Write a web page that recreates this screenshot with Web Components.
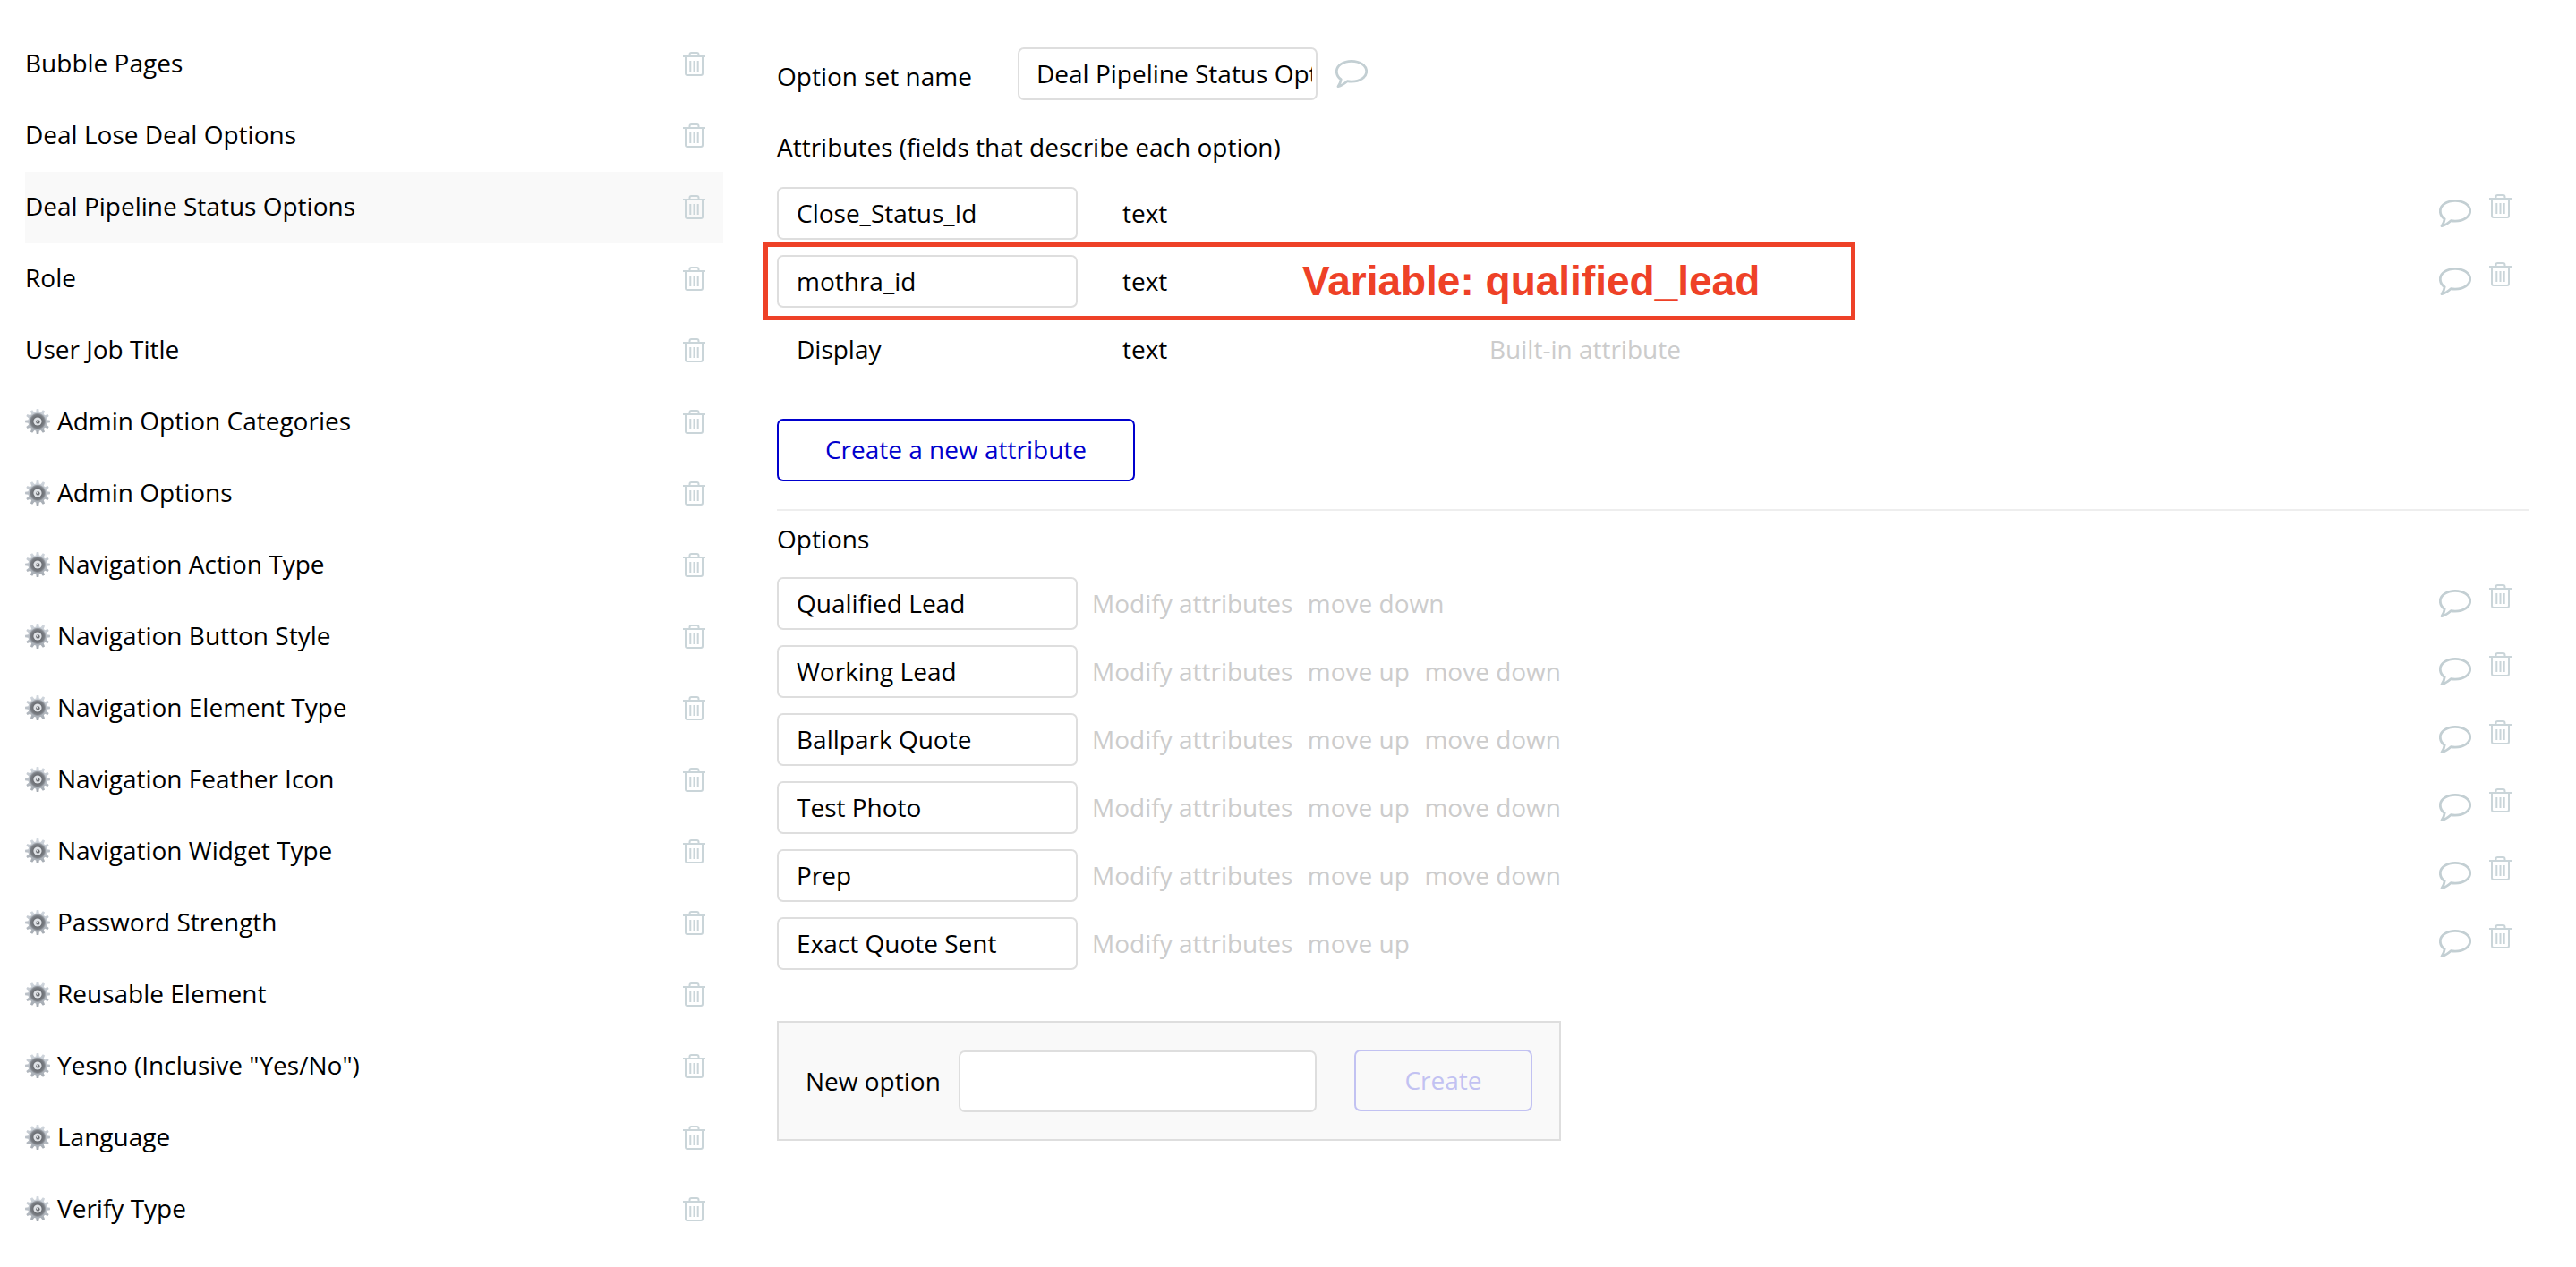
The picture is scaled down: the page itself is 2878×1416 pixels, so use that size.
<!DOCTYPE html>
<html>
<head>
<meta charset="utf-8">
<title>Option sets</title>
<style>
html, body {
  margin: 0;
  padding: 0;
  background: #fff;
  font-family: "Open Sans", sans-serif;
  font-size: 28px;
  line-height: 40px;
  color: #000;
}
</style>
</head>
<body>
<option-editor>
  <set-list slot="sidebar">
    <set-item>Bubble Pages</set-item>
    <set-item>Deal Lose Deal Options</set-item>
    <set-item selected>Deal Pipeline Status Options</set-item>
    <set-item>Role</set-item>
    <set-item>User Job Title</set-item>
    <set-item gear>Admin Option Categories</set-item>
    <set-item gear>Admin Options</set-item>
    <set-item gear>Navigation Action Type</set-item>
    <set-item gear>Navigation Button Style</set-item>
    <set-item gear>Navigation Element Type</set-item>
    <set-item gear>Navigation Feather Icon</set-item>
    <set-item gear>Navigation Widget Type</set-item>
    <set-item gear>Password Strength</set-item>
    <set-item gear>Reusable Element</set-item>
    <set-item gear>Yesno (Inclusive "Yes/No")</set-item>
    <set-item gear>Language</set-item>
    <set-item gear>Verify Type</set-item>
  </set-list>

  <name-row slot="main">Deal Pipeline Status Options</name-row>
  <section-label slot="main" style="margin-top:32px;margin-bottom:25px">Attributes (fields that describe each option)</section-label>
  <attr-row slot="main" name="Close_Status_Id"></attr-row>
  <attr-row slot="main" name="mothra_id"><red-note slot="note">Variable: qualified_lead</red-note></attr-row>
  <attr-row slot="main" name="Display" builtin></attr-row>
  <create-button slot="main">Create a new attribute</create-button>
  <hr-line slot="main"></hr-line>
  <section-label slot="main" style="margin-bottom:23px">Options</section-label>
  <option-row slot="main" name="Qualified Lead" down></option-row>
  <option-row slot="main" name="Working Lead" up down></option-row>
  <option-row slot="main" name="Ballpark Quote" up down></option-row>
  <option-row slot="main" name="Test Photo" up down></option-row>
  <option-row slot="main" name="Prep" up down></option-row>
  <option-row slot="main" name="Exact Quote Sent" up></option-row>
  <new-option slot="main"></new-option>
</option-editor>

<script>
function define(name, html, setup) {
  const template = document.createElement('template');
  template.innerHTML = html;
  customElements.define(name, class extends HTMLElement {
    constructor() {
      super();
      this.attachShadow({mode: 'open'});
      this.shadowRoot.appendChild(template.content.cloneNode(true));
    }
    connectedCallback() {
      if (setup) setup(this, this.shadowRoot);
    }
  });
}

define('trash-icon', `
<style>
:host { display: block; width: 25px; height: 27px; flex: none; }
svg { display: block; }
</style>
<svg width="25" height="27" viewBox="0 0 25 27" fill="none" stroke="#cad5d9" stroke-width="2">
  <path d="M0 5H25"/>
  <path d="M7.5 5V3a2 2 0 0 1 2-2h6a2 2 0 0 1 2 2v2"/>
  <path d="M3 5V24a2 2 0 0 0 2 2H20a2 2 0 0 0 2-2V5"/>
  <path d="M8.3 10V22M12.5 10V22M16.7 10V22"/>
</svg>`);

define('bubble-icon', `
<style>
:host { display: block; width: 36px; height: 31px; flex: none; }
svg { display: block; }
</style>
<svg width="36" height="31" viewBox="0 0 36 31" fill="none" stroke="#c3cfd3" stroke-width="2.8" stroke-linejoin="round">
  <path d="M18 1.4C27.4 1.4 34.7 6.4 34.7 12.8C34.7 19.2 27.4 24.2 18 24.2C16.2 24.2 14.6 24 13.2 23.7C10.6 26 7.4 28.6 3 29.6C4.6 27.6 5.8 24.8 6.2 21.6C3 19.6 1.3 16.4 1.3 12.8C1.3 6.4 8.6 1.4 18 1.4Z"/>
</svg>`);

define('gear-icon', `
<style>
:host { display: block; width: 28px; height: 28px; flex: none; }
svg { display: block; }
</style>
<svg width="28" height="28" viewBox="0 0 28 28">
  <defs>
    <linearGradient id="teeth" x1="0" y1="0" x2="0" y2="1">
      <stop offset="0" stop-color="#d3d9e0"/>
      <stop offset="1" stop-color="#a3a9b0"/>
    </linearGradient>
    <radialGradient id="ring" cx="0.5" cy="0.5" r="0.5">
      <stop offset="0.5" stop-color="#6a6d72"/>
      <stop offset="0.8" stop-color="#7b7f85"/>
      <stop offset="1" stop-color="#aeb3ba"/>
    </radialGradient>
  </defs>
  <polygon class="wheel" fill="url(#teeth)"/>
  <circle cx="14" cy="14" r="9.4" fill="url(#ring)"/>
  <circle cx="14" cy="14" r="4.6" fill="#dfe2e6"/>
  <circle cx="14.4" cy="14.4" r="2.2" fill="#6b6e73"/>
  <circle cx="13.8" cy="13.8" r="0.9" fill="#f4f5f7"/>
</svg>`, (el, root) => {
  // 12 teeth, trapezoid per tooth
  const pts = [];
  for (let i = 0; i < 12; i++) {
    const a = i * Math.PI / 6;
    for (const [da, r] of [[-0.17, 10.6], [-0.09, 14], [0.09, 14], [0.17, 10.6]]) {
      pts.push((14 + r * Math.sin(a + da)).toFixed(2) + ',' + (14 - r * Math.cos(a + da)).toFixed(2));
    }
  }
  root.querySelector('.wheel').setAttribute('points', pts.join(' '));
});

define('set-item', `
<style>
:host {
  display: flex;
  align-items: center;
  height: 80px;
  font-size: 28px;
  line-height: 40px;
}
:host([selected]) { background: #f9f9f9; }
.label { flex: 1; display: flex; align-items: center; gap: 8px; }
.label span { padding-bottom: 4px; }
gear-icon { display: none; margin-top: -2px; }
:host([gear]) gear-icon { display: block; }
trash-icon { margin: 0 20px 1px 0; }
</style>
<div class="label"><gear-icon></gear-icon><span><slot></slot></span></div>
<trash-icon></trash-icon>`);

define('set-list', `
<style>
:host { display: block; width: 780px; padding-top: 32px; }
</style>
<slot></slot>`);

define('text-field', `
<style>
:host {
  display: block;
  box-sizing: border-box;
  width: 336px;
  height: 59px;
  padding: 6.5px 4px 0 20px;
  border: 2px solid #dedede;
  border-radius: 7px;
  background: #fff;
  flex: none;
}
.clip { display: block; height: 42px; overflow: hidden; white-space: nowrap; }
</style>
<span class="clip"><slot></slot></span>`);

define('name-row', `
<style>
:host { display: flex; align-items: center; height: 59px; }
.label { width: 269px; padding-top: 4px; }
text-field { width: 335px; padding-left: 19px; }
bubble-icon { margin-left: 20px; margin-top: -1px; }
</style>
<div class="label">Option set name</div>
<text-field><slot></slot></text-field>
<bubble-icon></bubble-icon>`);

define('section-label', `
<style>
:host { display: block; height: 40px; }
</style>
<slot></slot>`);

define('row-tools', `
<style>
:host {
  display: flex;
  align-self: stretch;
  align-items: center;
  gap: 20px;
  margin-left: auto;
  margin-right: 20px;
}
trash-icon { align-self: flex-start; margin-top: 8px; }
</style>
<bubble-icon></bubble-icon>
<trash-icon></trash-icon>`);

define('attr-row', `
<style>
:host {
  display: flex;
  align-items: center;
  position: relative;
  height: 59px;
  margin-bottom: 17px;
}
.name { width: 336px; box-sizing: border-box; padding: 0 0 2px 22px; flex: none; }
.type { margin-left: 50px; width: 410px; flex: none; padding-bottom: 2px; }
.builtin { color: #ccc; display: none; padding-bottom: 2px; }
:host([builtin]) .builtin { display: block; }
:host([builtin]) row-tools { display: none; }
</style>
<text-field class="field"></text-field>
<div class="name" hidden></div>
<div class="type">text</div>
<div class="builtin">Built-in attribute</div>
<slot name="note"></slot>
<row-tools></row-tools>`, (el, root) => {
  const name = el.getAttribute('name');
  if (el.hasAttribute('builtin')) {
    root.querySelector('.field').remove();
    const n = root.querySelector('.name');
    n.hidden = false;
    n.textContent = name;
  } else {
    root.querySelector('.field').textContent = name;
    root.querySelector('.name').remove();
  }
});

define('red-note', `
<style>
:host {
  position: absolute;
  left: -15px;
  top: -14px;
  box-sizing: border-box;
  width: 1220px;
  height: 87px;
  border: 5px solid #ee4127;
  display: flex;
  align-items: center;
  padding: 0 0 2px 597px;
  font: bold 46px/52px "Liberation Sans", Arial, sans-serif;
  color: #ee4127;
  white-space: nowrap;
}
</style>
<slot></slot>`);

define('create-button', `
<style>
:host {
  display: flex;
  align-items: center;
  justify-content: center;
  box-sizing: border-box;
  width: 400px;
  height: 70px;
  margin-top: 31px;
  padding-bottom: 2px;
  border: 2px solid #0000cd;
  border-radius: 7px;
  color: #0000cd;
}
</style>
<slot></slot>`);

define('hr-line', `
<style>
:host {
  display: block;
  height: 2px;
  margin: 31px 0 11px;
  background: #eeeeee;
}
</style>`);

define('option-row', `
<style>
:host {
  display: flex;
  align-items: center;
  height: 59px;
  margin-bottom: 17px;
  color: #ccc;
}
.links { display: flex; gap: 16.5px; margin-left: 16px; padding-bottom: 2px; }
text-field { color: #000; }
</style>
<text-field></text-field>
<div class="links"><span>Modify attributes</span></div>
<row-tools></row-tools>`, (el, root) => {
  root.querySelector('text-field').textContent = el.getAttribute('name');
  const links = root.querySelector('.links');
  for (const [attr, text] of [['up', 'move up'], ['down', 'move down']]) {
    if (el.hasAttribute(attr)) {
      const s = document.createElement('span');
      s.textContent = text;
      links.appendChild(s);
    }
  }
});

define('new-option', `
<style>
:host {
  display: flex;
  align-items: center;
  box-sizing: border-box;
  width: 876px;
  height: 134px;
  margin-top: 40px;
  padding-left: 30px;
  border: 2px solid #dedede;
  background: #f9f9f9;
}
.label { width: 171px; flex: none; }
.input {
  box-sizing: border-box;
  width: 400px;
  height: 69px;
  border: 2px solid #dedede;
  border-radius: 7px;
  background: #fff;
}
.create {
  display: flex;
  align-items: center;
  justify-content: center;
  box-sizing: border-box;
  width: 199px;
  height: 69px;
  margin: -2px 0 0 42px;
  padding-bottom: 1px;
  border: 2px solid #c2c2f2;
  border-radius: 7px;
  color: #c2c2f2;
}
</style>
<div class="label">New option</div>
<div class="input"></div>
<div class="create">Create</div>`);

define('option-editor', `
<style>
:host {
  display: flex;
  gap: 60px;
  padding-left: 28px;
  min-height: 1416px;
  box-sizing: border-box;
  overflow: hidden;
}
.main {
  width: 1958px;
  padding-top: 53px;
  display: flex;
  flex-direction: column;
  align-items: stretch;
}
::slotted(create-button), ::slotted(new-option) { align-self: flex-start; }
</style>
<slot name="sidebar"></slot>
<div class="main"><slot name="main"></slot></div>`);
</script>
</body>
</html>
